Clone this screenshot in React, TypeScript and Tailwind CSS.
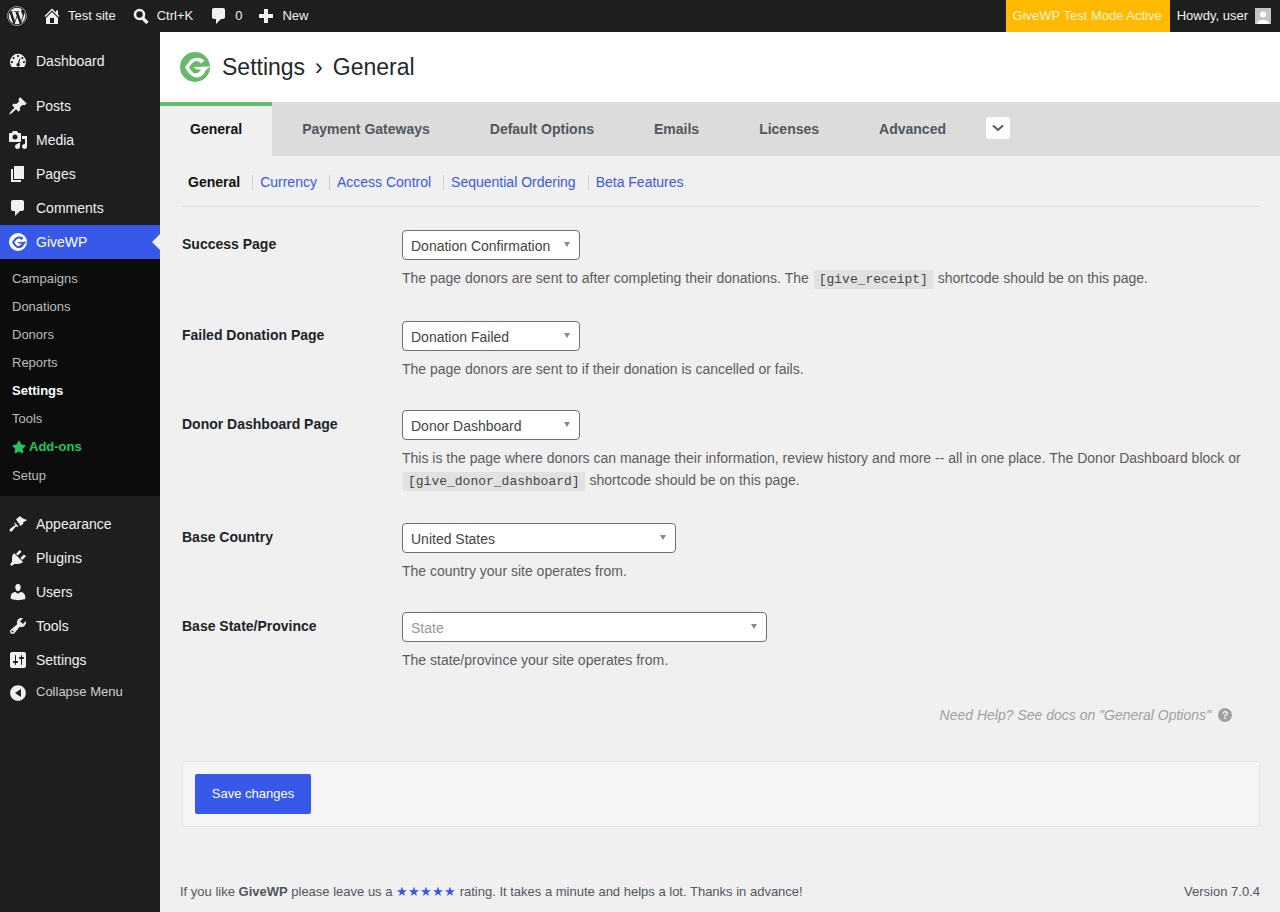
import React from 'react';
import { FaWordpress, FaStar } from 'react-icons/fa';

function GiveLogo({ size, ring, inner }: { size: number; ring: string; inner: string }) {
    return (
        <svg width={size} height={size} viewBox="0 0 30 30">
            <circle cx="15" cy="15" r="15" fill={ring} />
            <path d="M24.500 8.500C20 4.500 14 5 10 8.500L5 15.300C8 21 12 25.500 17 25.500C21 25.500 24.500 22 25.500 18.500L30 14.500L13 15L17 17.500L21 17.500C19.500 20.500 17 21.800 14.800 21.500C12.500 21 10.500 18 9 15.300C11 12.500 13 9.500 16 9C18 9 20 10 21 11.500Z" fill={inner} />
        </svg>
    );
}

function Dashicon({ d }: { d: string }) {
    return (
        <svg width="20" height="20" viewBox="0 0 20 20" fill="currentColor" fillRule="evenodd">
            <path d={d} />
        </svg>
    );
}

const commentPath = 'M5 2h9c1.100 0 2 .9 2 2v7c0 1.100-.9 2-2 2h-2l-5 5v-5H5c-1.100 0-2-.9-2-2V4c0-1.100.9-2 2-2z';

const icons: Record<string, string> = {
    dashboard: 'M3.760 16h12.480A8.400 8.400 0 0 0 18 10.860a8 8 0 0 0-16 0C2 12.790 2.660 14.570 3.760 16zM10 4a1.100 1.100 0 1 1 0 2.200A1.100 1.100 0 0 1 10 4zM5.600 6a1.100 1.100 0 1 1 0 2.200 1.100 1.100 0 0 1 0-2.200zM14.400 6a1.100 1.100 0 1 1 0 2.200 1.100 1.100 0 0 1 0-2.200zM4 10a1.100 1.100 0 1 1 0 2.200A1.100 1.100 0 0 1 4 10zM16 10a1.100 1.100 0 1 1 0 2.200 1.100 1.100 0 0 1 0-2.200zM11.500 7.500l.9.300-1.200 4.700a1.700 1.700 0 1 1-1.400-.3z',
    posts: 'M10.440 3.020l1.820-1.820 6.360 6.350-1.830 1.820c-1.050-.68-2.480-.57-3.410.36l-.75.75c-.92.93-1.040 2.350-.35 3.410l-1.830 1.820-2.410-2.410-2.800 2.790c-.42.42-3.380 2.710-3.800 2.290s1.860-3.390 2.280-3.810l2.790-2.790L4.100 9.360l1.830-1.820c1.050.69 2.480.57 3.400-.36l.75-.75c.93-.92 1.050-2.350.36-3.410z',
    media: 'M13 11V4c0-.55-.45-1-1-1h-1.670L9 1H5L3.670 3H2c-.55 0-1 .45-1 1v7c0 .55.45 1 1 1h10c.55 0 1-.45 1-1zM7 4.500c1.380 0 2.500 1.120 2.500 2.500S8.380 9.500 7 9.500 4.500 8.380 4.500 7 5.620 4.500 7 4.500zM14 6h5v10.500c0 1.380-1.120 2.500-2.500 2.500S14 17.880 14 16.500s1.120-2.500 2.500-2.500c.17 0 .34.020.5.050V9h-3V6zm-4 8.050V13h2v3.500c0 1.380-1.120 2.500-2.500 2.500S7 17.880 7 16.500 8.120 14 9.500 14c.17 0 .34.020.5.050z',
    pages: 'M6 15V2h10v13H6zm-1 1h8v2H3V5h2v11z',
    comments: commentPath,
    appearance: 'M8 5.300L12 2Q14 4.500 19.300 6L15 8.500L15.500 9.500L12.500 12ZM6.500 8.200L10.400 12.300L9.200 13L8 12.300L4 17.200C3 18 1.500 17.500 1.500 16C1.500 15.500 2 15 2.500 14.500L7.500 10.800L6.300 9.500Z',
    plugins: 'M13.110 4.360L9.870 7.600 8 5.730l3.240-3.240c.35-.34 1.050-.2 1.560.32.520.510.660 1.210.310 1.550zm-8 1.770l.910-1.120 9.010 9.010-1.190.840c-.710.710-2.630 1.160-3.820 1.160H6.140L4.900 17.260c-.590.590-1.540.590-2.120 0-.590-.580-.590-1.530 0-2.120l1.240-1.240v-3.880c0-1.130.4-3.190 1.090-3.890zm7.260 3.970l3.240-3.240c.340-.350 1.040-.210 1.550.310.520.510.660 1.210.320 1.560l-3.240 3.240z',
    users: 'M10 9.250c-2.270 0-2.730-3.440-2.730-3.440C7 4.020 7.820 2 9.970 2c2.160 0 2.980 2.020 2.710 3.810 0 0-.410 3.440-2.680 3.440zm0 2.570L12.720 10c2.390 0 4.520 2.330 4.520 4.530v2.490s-3.650 1.130-7.240 1.130c-3.650 0-7.240-1.130-7.240-1.130v-2.490c0-2.250 1.940-4.480 4.470-4.480z',
    tools: 'M16.680 9.770c-1.340 1.340-3.300 1.670-4.950.990l-5.410 6.520c-.990.990-2.590.990-3.580 0s-.990-2.590 0-3.570l6.520-5.420c-.680-1.650-.350-3.610.990-4.950 1.280-1.280 3.120-1.620 4.720-1.060l-2.890 2.890 2.820 2.820 2.860-2.870c.530 1.580.180 3.380-1.080 4.650zM3.810 16.210c.400.390 1.030.390 1.420 0 .400-.400.400-1.030 0-1.430-.390-.390-1.020-.390-1.420 0-.400.400-.400 1.030 0 1.430z',
    settings: 'M18 16V4c0-1.100-.9-2-2-2H4c-1.100 0-2 .9-2 2v12c0 1.100.9 2 2 2h12c1.100 0 2-.9 2-2zM8 11h1c.55 0 1 .45 1 1s-.45 1-1 1H8v1.500c0 .280-.220.500-.500.500s-.500-.220-.500-.500V13H6c-.55 0-1-.45-1-1s.45-1 1-1h1V5.500c0-.280.220-.500.500-.500s.500.220.500.500V11zm5-2h-1c-.55 0-1-.45-1-1s.45-1 1-1h1V5.500c0-.280.220-.500.500-.500s.500.220.500.500V7h1c.55 0 1 .45 1 1s-.45 1-1 1h-1v5.500c0 .280-.220.500-.500.500s-.500-.220-.500-.500V9z',
    collapse: 'M10 2.160c4.330 0 7.840 3.510 7.840 7.840s-3.510 7.840-7.840 7.840S2.160 14.330 2.160 10 5.670 2.160 10 2.160zM13 14V6l-6 4z',
    home: 'M16 8.500l1.530 1.530-1.060 1.060L10 4.620l-6.470 6.470-1.060-1.060L10 2.500l4 4v-2h2v4zm-6-2.460l6 5.990V18H4v-5.970zM12 17v-5H8v5h4z',
};

function MenuItem({ icon, label, active }: { icon: string; label: string; active?: boolean }) {
    return (
        <div className={`relative flex h-[34px] items-center text-sm ${active ? 'bg-[#3858e9] text-white' : 'text-[#f0f0f0]'}`}>
            <span className="flex w-9 shrink-0 justify-center text-[#f0f0f0]">
                {icon === 'give' ? <GiveLogo size={18} ring="#ffffff" inner="#3858e9" /> : <Dashicon d={icons[icon]} />}
            </span>
            {label}
            {active && <span className="absolute right-0 top-[9px] h-0 w-0 border-y-8 border-r-8 border-y-transparent border-r-[#f0f0f0]" />}
        </div>
    );
}

function Sidebar() {
    const sub = ['Campaigns', 'Donations', 'Donors', 'Reports', 'Settings', 'Tools'];
    return (
        <aside className="w-40 shrink-0 bg-[#1e1e1e] font-['Liberation_Sans',sans-serif]">
            <div className="pt-3">
                <MenuItem icon="dashboard" label="Dashboard" />
            </div>
            <div className="mt-[11px]">
                <MenuItem icon="posts" label="Posts" />
                <MenuItem icon="media" label="Media" />
                <MenuItem icon="pages" label="Pages" />
                <MenuItem icon="comments" label="Comments" />
                <MenuItem icon="give" label="GiveWP" active />
            </div>
            <ul className="bg-[#0c0c0c] pb-[6px] pt-[6px] text-[13px] text-[#bcbcbc]">
                {sub.map((s) => (
                    <li key={s} className={`flex h-7 items-center pl-3 ${s === 'Settings' ? 'font-bold text-white' : ''}`}>{s}</li>
                ))}
                <li className="flex h-7 items-center gap-[3px] pl-3 font-bold text-[#22c55e]"><FaStar size={14} />Add-ons</li>
                <li className="flex h-[29px] items-center pl-3 pt-[1px]">Setup</li>
            </ul>
            <div className="mt-[11px]">
                <MenuItem icon="appearance" label="Appearance" />
                <MenuItem icon="plugins" label="Plugins" />
                <MenuItem icon="users" label="Users" />
                <MenuItem icon="tools" label="Tools" />
                <MenuItem icon="settings" label="Settings" />
            </div>
            <div className="flex h-[30px] items-center text-[13px] text-[#d0d0d0]">
                <span className="flex w-9 shrink-0 justify-center pt-[2px] text-[#f0f0f0]">
                    <Dashicon d={icons.collapse} />
                </span>
                Collapse Menu
            </div>
        </aside>
    );
}

function TopBar() {
    return (
        <header className="flex h-8 items-center bg-[#1e1e1e] text-[13px] text-[#f0f0f0] font-['Liberation_Sans',sans-serif]">
            <span className="ml-[7px] mr-[15px]"><FaWordpress size={20} /></span>
            <span className="flex items-center gap-[6px]">
                <Dashicon d={icons.home} />
                Test site
            </span>
            <span className="ml-4 flex items-center gap-[7px]">
                <svg width="18" height="18" viewBox="0 0 18 18" fill="none" stroke="currentColor">
                    <circle cx="7.500" cy="7.500" r="4.500" strokeWidth="2.600" />
                    <path d="M10.500 11l5 5" strokeWidth="3.200" />
                </svg>
                Ctrl+K
            </span>
            <span className="ml-4 flex items-center gap-[6px]">
                <Dashicon d={commentPath} />
                0
            </span>
            <span className="ml-4 flex items-center gap-[8px]">
                <svg width="16" height="16" viewBox="0 0 16 16" fill="currentColor"><path d="M6 1h4v5h5v4h-5v5H6v-5H1V6h5z" /></svg>
                New
            </span>
            <span className="ml-auto flex h-full items-center bg-[#ffba00] pl-[7px] pr-2 text-[#fdf3d0]">GiveWP Test Mode Active</span>
            <span className="flex items-center gap-[7px] pl-[7px] pr-[9px]">
                Howdy, user
                <span className="flex h-4 w-4 items-end justify-center overflow-hidden bg-[#c4c4c4]">
                    <svg width="16" height="16" viewBox="0 0 16 16" fill="#ffffff"><circle cx="8" cy="6.500" r="3" /><path d="M2 16c0-3.500 3-4 6-4s6 .5 6 4z" /></svg>
                </span>
            </span>
        </header>
    );
}

function Select({ value, width, placeholder }: { value: string; width: string; placeholder?: boolean }) {
    return (
        <div className={`flex h-[30px] items-center justify-between rounded-[4px] border border-[#6a7178] bg-white pl-2 pr-[9px] ${width} ${placeholder ? 'text-[#999999]' : 'text-[#444444]'}`}>
            <span className="pt-[1px]">{value}</span>
            <span className="mb-px h-0 w-0 border-x-[3.5px] border-t-[5px] border-x-transparent border-t-[#888888]" />
        </div>
    );
}

function Code({ children }: { children: string }) {
    return <code className="mx-px bg-[#e1e1e1] px-[5px] py-[2px] font-['Liberation_Mono',monospace] text-[13px] text-[#444444]">{children}</code>;
}

function Row({ label, children, desc }: { label: string; children: React.ReactNode; desc: React.ReactNode }) {
    return (
        <div className="flex pb-[30px]">
            <div className="w-[220px] shrink-0 pt-1 text-sm font-bold leading-[20px] text-[#1d2327]">{label}</div>
            <div>
                {children}
                <p className="mt-[7px] text-sm leading-[22px] text-[#5c5c5c]">{desc}</p>
            </div>
        </div>
    );
}

function Sep() {
    return <span className="ml-3 mr-[7px] h-[15px] w-px bg-[#cccccc]" />;
}

export default function App() {
    const tabs = ['Payment Gateways', 'Default Options', 'Emails', 'Licenses', 'Advanced'];
    return (
        <div className="h-[912px] overflow-hidden bg-[#f0f0f0]">
            <TopBar />
            <div className="flex h-[880px]">
                <Sidebar />
                <main className="flex min-w-0 flex-1 flex-col font-['Liberation_Sans',sans-serif]">
                    <div className="flex h-[70px] items-center gap-3 bg-white pl-5 text-[23px] text-[#23282d]">
                        <GiveLogo size={30} ring="#66bb6a" inner="#ffffff" />
                        <span className="flex gap-[10px]"><span>Settings</span><span>›</span><span>General</span></span>
                    </div>
                    <nav className="flex h-[54px] bg-[#dcdcdc] text-sm font-bold text-[#50575e]">
                        <div className="flex items-center border-t-4 border-[#66bb6a] bg-[#f0f0f0] px-[30px] pb-1 text-[#111111]">General</div>
                        {tabs.map((t) => (
                            <div key={t} className="flex items-center px-[30px]">{t}</div>
                        ))}
                        <div className="ml-[10px] mt-[15px] flex h-[22px] w-6 items-center justify-center rounded-[3px] bg-white">
                            <svg width="12" height="8" viewBox="0 0 12 8" fill="none" stroke="#50575e" strokeWidth="2"><path d="M1 1.500l5 4.500 5-4.500" /></svg>
                        </div>
                    </nav>
                    <div className="pl-[22px] pr-5">
                        <div className="flex h-[51px] items-center border-b border-[#dcdcdc] pl-[6px] pt-[2px] text-sm text-[#3858e9]">
                            <span className="font-bold text-[#111111]">General</span>
                            <Sep />
                            <span>Currency</span>
                            <Sep />
                            <span>Access Control</span>
                            <Sep />
                            <span>Sequential Ordering</span>
                            <Sep />
                            <span>Beta Features</span>
                        </div>
                        <div className="pt-[23px] text-sm">
                            <Row label="Success Page" desc={<>The page donors are sent to after completing their donations. The <Code>[give_receipt]</Code> shortcode should be on this page.</>}>
                                <Select value="Donation Confirmation" width="w-[178px]" />
                            </Row>
                            <Row label="Failed Donation Page" desc="The page donors are sent to if their donation is cancelled or fails.">
                                <Select value="Donation Failed" width="w-[178px]" />
                            </Row>
                            <Row label="Donor Dashboard Page" desc={<>This is the page where donors can manage their information, review history and more -- all in one place. The Donor Dashboard block or<br /><Code>[give_donor_dashboard]</Code> shortcode should be on this page.</>}>
                                <Select value="Donor Dashboard" width="w-[178px]" />
                            </Row>
                            <Row label="Base Country" desc="The country your site operates from.">
                                <Select value="United States" width="w-[274px]" />
                            </Row>
                            <Row label="Base State/Province" desc="The state/province your site operates from.">
                                <Select value="State" width="w-[365px]" placeholder />
                            </Row>
                        </div>
                        <div className="flex items-center justify-end gap-[7px] pr-7 pt-1 text-sm italic leading-5 text-[#a0a0a0]">
                            Need Help? See docs on "General Options"
                            <span className="flex h-[14px] w-[14px] items-center justify-center rounded-full bg-[#a0a0a0] text-[11px] font-bold not-italic text-[#f0f0f0]">?</span>
                        </div>
                        <div className="mt-9 rounded-[1px] border border-[#e3e3e3] bg-[#f5f5f5] p-3">
                            <button className="h-10 w-[116px] rounded-[2px] bg-[#3858e9] text-[13px] text-white">Save changes</button>
                        </div>
                    </div>
                    <div className="mt-auto flex justify-between pb-[11px] pl-5 pr-5 text-[13px] leading-[18px] text-[#50575e]">
                        <span>If you like <b>GiveWP</b> please leave us a <span className="text-[#3858e9]">★★★★★</span> rating. It takes a minute and helps a lot. Thanks in advance!</span>
                        <span>Version 7.0.4</span>
                    </div>
                </main>
            </div>
        </div>
    );
}
